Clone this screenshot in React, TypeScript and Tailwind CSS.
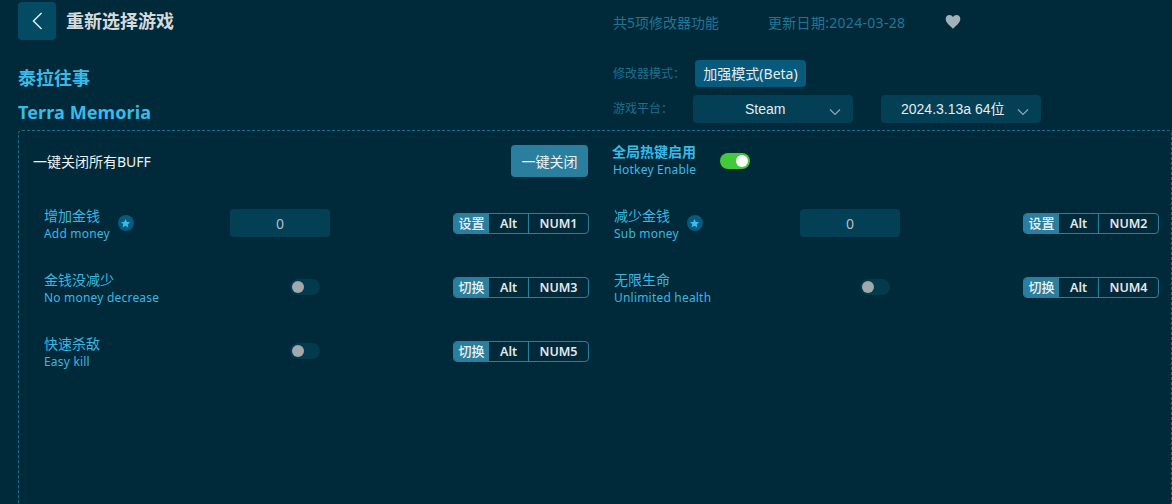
import React from "react";

const font = { fontFamily: '"Noto Sans", "Noto Sans CJK SC", sans-serif' };

function Hotkey({ mode, num }: { mode: string; num: string }) {
  return (
    <div className="flex h-[21px] w-[136px] overflow-hidden rounded-[4px] border border-[#2a7f9f] text-[12.5px] font-semibold leading-[19px] text-[#e4e8ea]">
      <div className="flex w-[35px] items-center justify-center bg-[#2a7f9f] text-[13px] font-medium text-[#eef2f4]">{mode}</div>
      <div className="flex w-[40px] items-center justify-center border-r border-[#2a7f9f]">Alt</div>
      <div className="flex flex-1 items-center justify-center">{num}</div>
    </div>
  );
}

function Label({ zh, en }: { zh: string; en: string }) {
  return (
    <div className="mt-[2px] flex flex-col text-[#38b8e2]">
      <span className="text-[14px] leading-[18px]">{zh}</span>
      <span className="text-[12px] leading-[17px] tracking-[0.2px]">{en}</span>
    </div>
  );
}

function Star() {
  return (
    <div className="flex h-4 w-4 items-center justify-center rounded-full bg-[#075a7c]">
      <svg viewBox="0 0 24 24" className="h-[11px] w-[11px]" fill="#38bdf0">
        <path d="M12 2l3 6.6 7.2.8-5.4 4.8 1.5 7.1L12 17l-6.3 3.3 1.5-7.1L1.800 9.400 9 8.600z" />
      </svg>
    </div>
  );
}

function InputRow({ zh, en, mode, num }: { zh: string; en: string; mode: string; num: string }) {
  return (
    <div className="flex h-[64px] w-[545px] items-center">
      <div className="flex w-[186px] items-center gap-[8px]">
        <Label zh={zh} en={en} />
        <Star />
      </div>
      <div className="flex h-[28px] w-[100px] items-center justify-center rounded-[4px] bg-[#033f55] text-[14px] text-[#b4c0c6]">0</div>
      <div className="ml-auto"><Hotkey mode={mode} num={num} /></div>
    </div>
  );
}

function ToggleRow({ zh, en, mode, num }: { zh: string; en: string; mode: string; num: string }) {
  return (
    <div className="flex h-[64px] w-[545px] items-center">
      <div className="w-[246px]"><Label zh={zh} en={en} /></div>
      <div className="flex h-4 w-[30px] items-center rounded-full bg-[#033a4c] pl-[2px]">
        <div className="h-[12px] w-[12px] rounded-full bg-[#a3a8ac]" />
      </div>
      <div className="ml-auto"><Hotkey mode={mode} num={num} /></div>
    </div>
  );
}

function Chevron() {
  return (
    <svg viewBox="0 0 12 8" className="h-[8px] w-[12px]" fill="none" stroke="#8fa9b5" strokeWidth="1.200">
      <path d="M1 1.500l5 5 5-5" />
    </svg>
  );
}

export default function App() {
  return (
    <div className="h-[504px] w-[1172px] overflow-hidden bg-[#002a3a]" style={font}>
      <div className="flex h-[130px] pl-[18px]">
        <div className="w-[595px] pt-[2px]">
          <div className="flex items-center">
            <div className="flex h-[38px] w-[38px] items-center justify-center rounded-[4px] bg-[#034a63]">
              <svg viewBox="0 0 12 20" className="h-[18px] w-[11px]" fill="none" stroke="#e6ecef" strokeWidth="1.600">
                <path d="M10.500 1L1.500 10l9 9" />
              </svg>
            </div>
            <span className="ml-[10px] text-[18px] font-bold text-[#d5dadc]">重新选择游戏</span>
          </div>
          <div className="mt-[25px] text-[18px] font-bold leading-[26px] text-[#38bbe8]">泰拉往事</div>
          <div className="mt-[8px] text-[18px] font-bold leading-[26px] tracking-[0.1px] text-[#38bbe8]">Terra Memoria</div>
        </div>
        <div className="flex-1 text-[12px] text-[#1f6f8e]">
          <div className="flex h-[44px] items-center text-[14px] text-[#1f7696]">
            <span className="w-[155px]">共5项修改器功能</span>
            <span className="w-[177px] tracking-[0.3px]">更新日期:2024-03-28</span>
            <svg viewBox="0 0 24 24" className="h-4 w-4" fill="#a3b1ba">
              <path d="M12 22C8 18 1 13 1 7.500 1 4 3.500 1.500 6.800 1.500c2.200 0 4 1.200 5.200 3 1.200-1.800 3-3 5.200-3C20.500 1.500 23 4 23 7.500 23 13 16 18 12 22z" />
            </svg>
          </div>
          <div className="mt-[16px] flex h-[27px] items-center">
            <span className="w-[82px]">修改器模式：</span>
            <div className="flex h-[27px] w-[111px] items-center justify-center rounded-[4px] bg-[#075a7c] text-[14px] text-[#e6ecef]">加强模式(Beta)</div>
          </div>
          <div className="mt-[8px] flex h-[28px] items-center">
            <span className="w-[80px]">游戏平台：</span>
            <div className="flex h-[28px] w-[160px] items-center rounded-[4px] bg-[#033f55] pl-[52px] pr-[12px] text-[14px] text-[#e6ecef]" style={{ fontFamily: '"Liberation Sans", "Noto Sans CJK SC", sans-serif' }}>
              <span>Steam</span>
              <span className="ml-auto mt-[6px]"><Chevron /></span>
            </div>
            <div className="ml-[28px] flex h-[28px] w-[160px] items-center rounded-[4px] bg-[#033f55] pl-[20px] pr-[12px] text-[14px] text-[#e6ecef]" style={{ fontFamily: '"Liberation Sans", "Noto Sans CJK SC", sans-serif' }}>
              <span>2024.3.13a 64位</span>
              <span className="ml-auto mt-[6px]"><Chevron /></span>
            </div>
          </div>
        </div>
      </div>
      <div className="ml-[18px] h-[400px] rounded-[4px] border border-dashed border-[#12708e]">
        <div className="flex h-[60px] items-center">
          <div className="flex w-[569px] items-center pl-[14px]">
            <span className="text-[14px] text-[#eef2f4]">一键关闭所有BUFF</span>
            <div className="ml-auto flex h-[32px] w-[77px] items-center justify-center rounded-[4px] bg-[#2a7f9f] text-[14px] text-[#eef2f4]">一键关闭</div>
          </div>
          <div className="ml-[24px] flex flex-col text-[#38bbe8]">
            <span className="text-[14px] font-bold leading-[18px]">全局热键启用</span>
            <span className="ml-[1px] text-[12px] leading-[18px] tracking-[0.2px]">Hotkey Enable</span>
          </div>
          <div className="ml-[24px] flex h-4 w-[30px] items-center justify-end rounded-full bg-[#43c93a] pr-[2px]">
            <div className="h-3 w-3 rounded-full bg-white" />
          </div>
        </div>
        <div className="grid grid-cols-[545px_545px] gap-x-[25px] pl-[25px]">
          <InputRow zh="增加金钱" en="Add money" mode="设置" num="NUM1" />
          <InputRow zh="减少金钱" en="Sub money" mode="设置" num="NUM2" />
          <ToggleRow zh="金钱没减少" en="No money decrease" mode="切换" num="NUM3" />
          <ToggleRow zh="无限生命" en="Unlimited health" mode="切换" num="NUM4" />
          <ToggleRow zh="快速杀敌" en="Easy kill" mode="切换" num="NUM5" />
        </div>
      </div>
    </div>
  );
}
